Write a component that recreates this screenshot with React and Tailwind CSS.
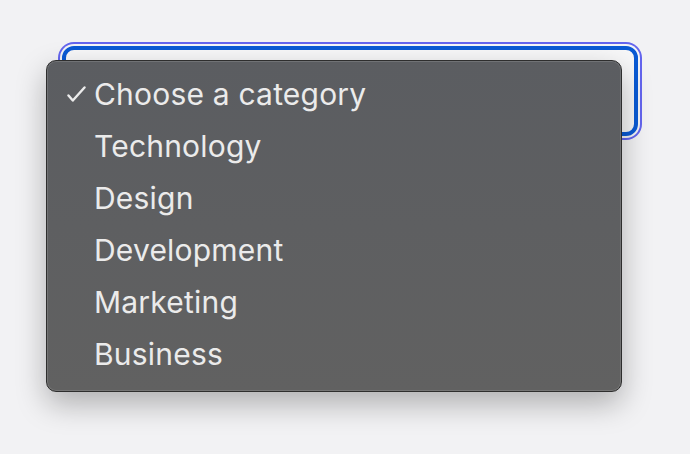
const options = ['Choose a category', 'Technology', 'Design', 'Development', 'Marketing', 'Business'];

function Check() {
  return (
    <svg width="20" height="16" viewBox="0 0 20 16" className="block">
      <path d="M1.5 9.5 L5.8 14.5 L17.5 1.5" fill="none" stroke="#ececec" strokeWidth="2.4" strokeLinecap="round" strokeLinejoin="round" />
    </svg>
  );
}

export default function App() {
  const selected = 0;

  return (
    <div className="min-h-[454px] w-full bg-[#f2f2f4] pt-[46px] pl-[62px]" style={{ fontFamily: 'Inter, "Noto Sans", sans-serif' }}>
      <div className="relative w-[576px] h-[90px] rounded-[12px] border-4 border-[#0a5ad4] bg-[#f7f7f8] ring-2 ring-[#6465ee] ring-offset-2 ring-offset-[#f4f4f6]">
        <div className="absolute left-[-20px] top-[10px] z-10 w-[576px] h-[332px] rounded-[10px] border border-[#2e2e2e] bg-linear-to-b from-[#5b5d61] to-[#616161] pt-[7px] shadow-[inset_0_0_0_1px_rgba(255,255,255,0.13),0_12px_30px_rgba(0,0,0,0.28)]">
          {options.map((opt, i) => (
            <div key={opt} className="flex items-center h-[52px] text-[30px] text-[#ebebeb] tracking-[0.2px]">
              <span className="w-[47px] pl-[20px] flex items-center">
                {i === selected && <Check />}
              </span>
              <span>{opt}</span>
            </div>
          ))}
        </div>
      </div>
    </div>
  );
}
